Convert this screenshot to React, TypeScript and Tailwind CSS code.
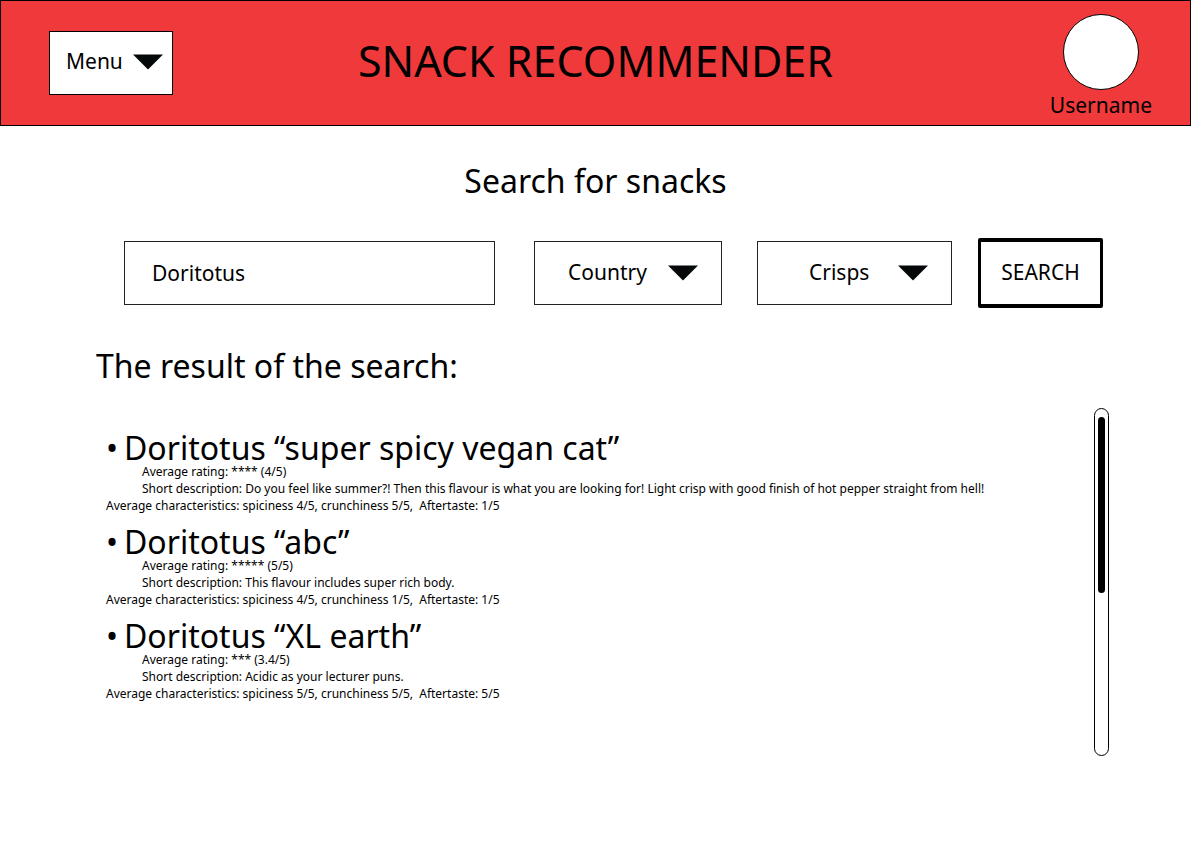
import { useState } from "react";

type Snack = {
  name: string;
  rating: string;
  description: string;
  characteristics: string;
};

const snacks: Snack[] = [
  {
    name: "Doritotus “super spicy vegan cat”",
    rating: "**** (4/5)",
    description:
      "Do you feel like summer?! Then this flavour is what you are looking for! Light crisp with good finish of hot pepper straight from hell!",
    characteristics: "spiciness 4/5, crunchiness 5/5,  Aftertaste: 1/5",
  },
  {
    name: "Doritotus “abc”",
    rating: "***** (5/5)",
    description: "This flavour includes super rich body.",
    characteristics: "spiciness 4/5, crunchiness 1/5,  Aftertaste: 1/5",
  },
  {
    name: "Doritotus “XL earth”",
    rating: "*** (3.4/5)",
    description: "Acidic as your lecturer puns.",
    characteristics: "spiciness 5/5, crunchiness 5/5,  Aftertaste: 5/5",
  },
];

function Arrow({ className = "" }: { className?: string }) {
  return (
    <svg
      viewBox="0 0 30 16"
      className={`h-4 w-[30px] shrink-0 ${className}`}
      aria-hidden="true"
    >
      <path d="M0 0.5H30L15 15.5Z" fill="#050808" />
    </svg>
  );
}

function Header() {
  return (
    <header className="grid h-[126px] grid-cols-[1fr_auto_1fr] border border-black bg-[#f0393b] px-[38px]">
      <button
        type="button"
        className="mt-[30px] ml-[10px] flex h-16 w-[124px] items-center justify-between border border-black bg-white pl-4 pr-[9px] pb-[2px] text-[21px]"
      >
        Menu
        <Arrow />
      </button>
      <h1 className="pt-8 text-[43px] leading-[56px]">SNACK RECOMMENDER</h1>
      <a
        href="#profile"
        className="flex flex-col items-center justify-self-end pt-[13px] text-[21px] leading-[30px]"
      >
        <span className="size-[76px] rounded-full border border-black bg-white" />
        Username
      </a>
    </header>
  );
}

function SearchForm() {
  const [query, setQuery] = useState("Doritotus");
  return (
    <form
      className="mt-9 flex items-center pl-[124px] pr-[88px] text-[21px]"
      onSubmit={(e) => e.preventDefault()}
    >
      <div className="mr-[39px] min-w-0 flex-[371]">
        <input
          type="text"
          aria-label="Snack name"
          value={query}
          onChange={(e) => setQuery(e.target.value)}
          className="block h-16 w-full rounded-none border border-[#222] bg-white pl-[27px]"
        />
      </div>
      <div className="relative mr-[35px] min-w-0 flex-[188]">
        <select
          aria-label="Country"
          className="block h-16 w-full appearance-none rounded-none border border-[#222] bg-white pl-[33px]"
        >
          <option>Country</option>
        </select>
        <Arrow className="pointer-events-none absolute right-6 top-6" />
      </div>
      <div className="relative mr-[26px] min-w-0 flex-[195]">
        <select
          aria-label="Snack type"
          className="block h-16 w-full appearance-none rounded-none border border-[#222] bg-white pl-[51px]"
        >
          <option>Crisps</option>
        </select>
        <Arrow className="pointer-events-none absolute right-6 top-6" />
      </div>
      <button
        type="submit"
        className="h-[70px] w-[125px] shrink-0 rounded-[2px] border-x-3 border-y-4 border-black bg-white"
      >
        SEARCH
      </button>
    </form>
  );
}

function SnackItem({ snack }: { snack: Snack }) {
  return (
    <li className="pt-[13px] text-[12px] leading-[17px]">
      <h3 className="flex text-[32px] leading-[30px]">
        <span className="w-[18px]" aria-hidden="true">
          •
        </span>
        {snack.name}
      </h3>
      <p className="pl-9">Average rating: {snack.rating}</p>
      <p className="pl-9">Short description: {snack.description}</p>
      <p className="whitespace-pre-wrap">
        Average characteristics: {snack.characteristics}
      </p>
    </li>
  );
}

function ScrollTrack() {
  return (
    <div className="h-[348px] w-[15px] shrink-0 rounded-full border border-black px-[3px] pt-2">
      <div className="h-[176px] w-full rounded-full bg-black" />
    </div>
  );
}

export default function App() {
  return (
    <div className="bg-white font-['Noto_Sans',sans-serif] text-black">
      <Header />
      <main>
        <h2 className="pt-[34px] text-center text-[32px] leading-[42px]">
          Search for snacks
        </h2>
        <SearchForm />
        <section>
          <h2 className="mt-9 pl-24 text-[32px] leading-[44px]">
            The result of the search:
          </h2>
          <div className="mt-5 flex justify-between pl-[106px] pr-[82px]">
            <ul className="min-w-0 pt-3">
              {snacks.map((snack) => (
                <SnackItem key={snack.name} snack={snack} />
              ))}
            </ul>
            <ScrollTrack />
          </div>
        </section>
      </main>
    </div>
  );
}
